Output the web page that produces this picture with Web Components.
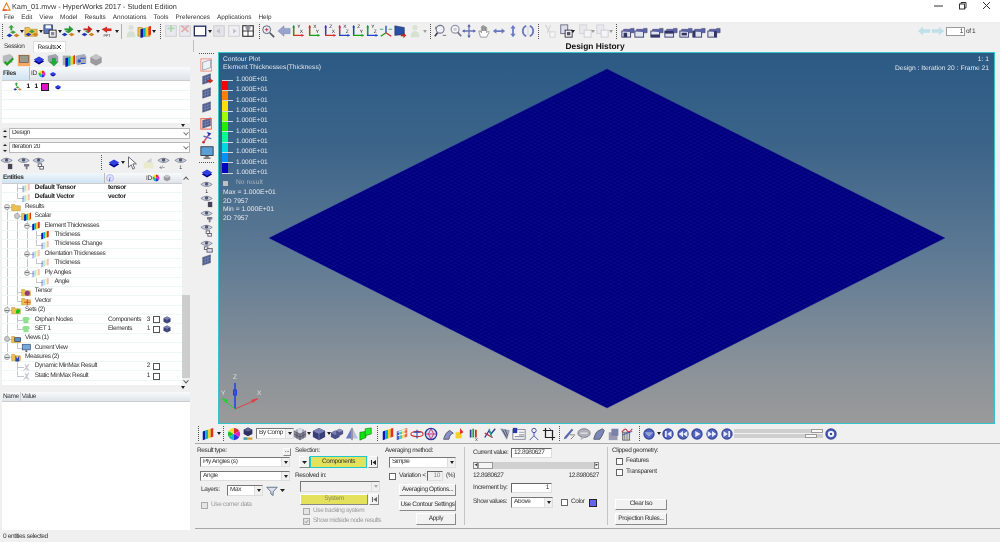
<!DOCTYPE html>
<html>
<head>
<meta charset="utf-8">
<title>HyperWorks</title>
<style>
  html, body { margin: 0; padding: 0; background: #f0f0f0; overflow: hidden; }
  body { font: 6.5px "Liberation Sans", Arial, sans-serif; letter-spacing: -.38px; color: #333; text-rendering: geometricPrecision; }
</style>
</head>
<body>
<hw-app></hw-app>
<script>
// little helpers for the icon drawings
const dia = (x, y, r, c) => `<polygon points="${x},${y-r*.6} ${x+r},${y} ${x},${y+r*.6} ${x-r},${y}" fill="${c}"/>`;
const cube = (x, y, r, c, d) => `<polygon points="${x},${y-r} ${x+r},${y-r*.5} ${x+r},${y+r*.5} ${x},${y+r} ${x-r},${y+r*.5} ${x-r},${y-r*.5}" fill="${d}"/><polygon points="${x},${y-r} ${x+r},${y-r*.5} ${x},${y} ${x-r},${y-r*.5}" fill="${c}"/>`;
const disc = (x, y) => dia(x, y + 1.5, 6, '#00008c') + dia(x, y - .5, 6, '#2f3fe0');
const mol = (dx = 0, dy = 0) => dia(4 + dx, 11 + dy, 3.4, '#2233bb') + dia(12 + dx, 11 + dy, 3.4, '#d08020') + dia(8 + dx, 7.5 + dy, 3.4, '#40a040');
const rain = (dx = 0, dy = 0) => `<g transform="translate(${dx} ${dy})"><path d="M2 5l3-1v10l-3 1z" fill="#0818b8"/><path d="M5 4l3-1v10l-3 1z" fill="#10b0c0"/><path d="M8 3l3-1v10l-3 1z" fill="#e8d820"/><path d="M11 2l3-1v10l-3 1z" fill="#e03020"/></g>`;
const folder = '<path d="M1 4h5l1 2h8v8H1z" fill="#ecc050" stroke="#a87810" stroke-width=".6"/>';
const arrow = (d, c) => `<path d="${d}" fill="${c}" stroke="#0004" stroke-width=".4"/>`;
const axis = (vc, hc, vl, hl) => `<path d="M3 2v11h11" fill="none" stroke="${hc}" stroke-width="1.4"/><path d="M3 2v10" stroke="${vc}" stroke-width="1.6"/><path d="M1.5 4L3 1l1.5 3z" fill="${vc}"/><path d="M12 11.500l3 1.500-3 1.500z" fill="${hc}"/><text x="7" y="5" font-size="5.500" fill="#222" font-family="Liberation Sans">${vl}</text><text x="10" y="10" font-size="5.500" fill="#222" font-family="Liberation Sans">${hl}</text>`;
const sheet = c => `<path d="M3 5l9-3v9l-9 3z" fill="${c}" stroke="#556" stroke-width=".5"/><path d="M6 4v9M9 3v9M3 8l9-3M3 11l9-3" stroke="#fff8" stroke-width=".4"/>`;
const eye = '<path d="M1 5q6-5 13 0q-6 5-13 0z" fill="#c8d4e0" stroke="#667" stroke-width=".7"/><circle cx="7.500" cy="4.600" r="2" fill="#557"/>';
const cam = (a, b) => `<rect x="1" y="${a}" width="10" height="7" fill="#dfe3f0" stroke="#336" stroke-width="1"/><path d="M3 ${a}v-2h7l1 -1h4v5h-4l-1 -1" fill="#5a63a8" stroke="#336" stroke-width=".5"/>${b}`;
const ball = g => `<circle cx="8" cy="8" r="6.500" fill="#3a4aa0"/><circle cx="8" cy="8" r="5" fill="#5566c0"/>${g}`;
const shirt = '<path d="M3 4l3-1h4l3 1 1 3-2 1v5H4V8L2 7z" fill="#8fe08f"/>';
const ICONS = {
  open: mol(0, 2) + arrow('M6 1l-3 3h2v3h2V4h2z', '#38a838'),
  folderm: folder + mol(1, 1),
  save: '<rect x="1" y="1" width="10" height="10" fill="#5a78b8" stroke="#223" stroke-width=".7"/><rect x="3" y="1.500" width="6" height="3.500" fill="#fff"/><rect x="7" y="7" width="8" height="8" fill="#fff" stroke="#222"/><rect x="9" y="9" width="4" height="4" fill="#889"/>',
  expg: mol(-1, 1) + arrow('M3 5h5V2l5 4-5 4V7H3z', '#20a030'),
  expr: mol(0, 1) + arrow('M3 5h5V2l5 4-5 4V7H3z', '#d02820'),
  ppt: arrow('M2 6l6-3v2h5v3H8v2z', '#d83020') + '<text x="4" y="15" font-size="4.500" fill="#333" font-family="Liberation Sans">PPT</text>',
  person: '<circle cx="8" cy="4" r="3" fill="#b8c8a8"/><path d="M3 15q0-7 5-7t5 7z" fill="#a8c8a0"/>',
  folderr: folder + rain(2, 1),
  addp: '<rect x="2" y="2" width="12" height="12" fill="#dde" stroke="#889"/><path d="M8 1v8M4 5h8" stroke="#3a3" stroke-width="2"/>',
  delp: '<rect x="2" y="2" width="12" height="12" fill="#dde" stroke="#889"/><path d="M4 2l8 7M12 2l-8 7" stroke="#c33" stroke-width="2"/>',
  page: '<rect x="1.500" y="2.500" width="13" height="11" fill="#fff" stroke="#202a60" stroke-width="1.500"/>',
  prevp: '<rect x="2" y="2" width="12" height="12" fill="#ccd" stroke="#889"/><path d="M9 5L5 8l4 3z" fill="#667"/>',
  nextp: '<rect x="2" y="2" width="12" height="12" fill="#eef" stroke="#889"/><path d="M7 5l4 3-4 3z" fill="#667"/>',
  multi: '<rect x="2" y="2" width="12" height="12" fill="#fff" stroke="#222" stroke-width="1.200"/><path d="M2 8h12M8 2v12" stroke="#222"/><circle cx="8" cy="4" r="3" fill="#889" opacity=".8"/>',
  zoomi: '<circle cx="6.500" cy="6.500" r="4.500" fill="#e8ecf8" stroke="#556"/><path d="M10 10l5 5" stroke="#556" stroke-width="2"/><path d="M4.500 6.500h4M6.500 4.500v4" stroke="#b33"/>',
  lback: '<path d="M1 8l7-6v3h7v6H8v3z" fill="#98a4d0" stroke="#667" stroke-width=".4"/>',
  xy: axis('#18a018', '#d03030', 'Y', 'X'), yx: axis('#d03030', '#18a018', 'X', 'Y'),
  zx: axis('#2040d0', '#d03030', 'Z', 'X'), xz: axis('#d03030', '#2040d0', 'X', 'Z'),
  zy: axis('#2040d0', '#18a018', 'Z', 'Y'), yz: axis('#18a018', '#2040d0', 'Y', 'Z'),
  iso: '<path d="M8 2v8" stroke="#2040d0" stroke-width="1.500"/><path d="M8 10L2 14" stroke="#18a018" stroke-width="1.500"/><path d="M8 10l6 4" stroke="#d03030" stroke-width="1.500"/><path d="M1 6h4M11 6h4" stroke="#2a7" stroke-width="1"/>',
  fit: '<path d="M2 2l11 2v8L2 13z" fill="#2850a8" stroke="#223" stroke-width=".5"/>' + arrow('M9 12h3v-2l3 3-3 3v-2H9z', '#d02820'),
  mag: '<circle cx="7" cy="6" r="4.500" fill="#eef1f8" stroke="#778" stroke-width="1.300"/><path d="M4 10l-3 4" stroke="#445" stroke-width="2"/><path d="M10 13h4M2 3v3" stroke="#667"/>',
  mag2: '<circle cx="7" cy="6" r="4.500" fill="#f4f6fb" stroke="#99a" stroke-width="1.500"/><circle cx="7" cy="6" r="2" fill="#ccd"/><path d="M10 9.500l4 4.500" stroke="#778" stroke-width="2"/>',
  move: '<path d="M8 1v14M2 8h12" stroke="#6a74b8" stroke-width="1.500"/><path d="M8 0l2 3H6zM8 16l2-3H6zM0 8l3-2v4zM16 8l-3-2v4z" fill="#5a64a8"/>',
  hand: '<path d="M4 15L2 8l2 0 1 2V3h1.500v5V2H8v6V3h1.500v5V4H11v6l2-2 1 1-3 6z" fill="#fff" stroke="#666" stroke-width=".7"/>',
  lr: '<path d="M1 8l4-3v2h6V5l4 3-4 3V9H5v2z" fill="#6a78c0"/>',
  ud: '<path d="M8 1l3 4H9v6h2l-3 4-3-4h2V5H5z" fill="#6a78c0"/>',
  rot: '<path d="M6 2q-4 2-4 6t4 6M10 2q4 2 4 6t-4 6" fill="none" stroke="#6a78c0" stroke-width="2"/><path d="M8 3v10" stroke="#ccd"/>',
  cut: '<path d="M4 1l5 9M10 1L6 10" stroke="#999" stroke-width="1.200"/><rect x="9" y="9" width="6" height="6" fill="#fff" stroke="#999"/>',
  copy: '<rect x="2" y="1" width="8" height="10" fill="#dde" stroke="#667"/><rect x="7" y="7" width="8" height="8" fill="#fff" stroke="#223"/><rect x="9" y="9" width="4" height="4" fill="#556"/>',
  paste: '<rect x="2" y="1" width="8" height="10" fill="#dde" stroke="#99a"/><rect x="7" y="7" width="8" height="8" fill="#fff" stroke="#889"/>',
  cam1: cam(8, '<rect x="3" y="10" width="4" height="5" fill="#336"/>'), cam2: cam(8, ''), cam3: cam(8, '<rect x="1" y="12" width="10" height="3" fill="#336"/>'),
  cam4: cam(8, '<rect x="1" y="8" width="10" height="3" fill="#336"/>'), cam5: cam(8, '<rect x="3" y="10" width="6" height="3" fill="#336"/>'), cam6: cam(8, '<rect x="1" y="8" width="3" height="7" fill="#336"/>'), cam7: cam(8, '<rect x="8" y="8" width="3" height="7" fill="#336"/>'),
  navl: '<path d="M1 8l6-5v3h8v4H7v3z" fill="#bfe0e8"/>', navr: '<path d="M15 8L9 3v3H1v4h8v3z" fill="#bfe0e8"/>',
  rain: rain(), rainf: `<g opacity=".3">${rain()}</g>`,
  wheel: '<circle cx="8" cy="8" r="7" fill="#fff"/><path d="M8 8V1a7 7 0 0 1 6 3.500z" fill="#e02828"/><path d="M8 8l6-3.500a7 7 0 0 1 0 7z" fill="#e820c0"/><path d="M8 8l6 3.500A7 7 0 0 1 8 15z" fill="#3030e0"/><path d="M8 8v7a7 7 0 0 1-6-3.500z" fill="#18b8c8"/><path d="M8 8l-6 3.500a7 7 0 0 1 0-7z" fill="#28c028"/><path d="M8 8L2 4.500A7 7 0 0 1 8 1z" fill="#f0e020"/>',
  raincube: cube(8, 5.500, 5, '#5a5f8c', '#2c3060') + '<rect x="3" y="12" width="10" height="2.500" fill="#d0a030"/><rect x="3" y="12" width="4" height="2.500" fill="#30a0d0"/>',
  wirecube: cube(8, 8, 7, '#d8d8e8', '#889') + '<path d="M1 4.500l7 3.500 7-3.500M8 8v7M4.500 3v10M11.500 3v10M1 8l7 3.500L15 8" fill="none" stroke="#334" stroke-width=".6"/>',
  cube: cube(8, 8, 7, '#7a80b0', '#383e78') + '<path d="M8 8v7" stroke="#aab" stroke-width=".5"/>',
  cubes: cube(6, 9, 5, '#7a80b0', '#4a5088') + cube(11, 6, 4, '#8a90b8', '#50568c'),
  half: '<path d="M7 2L1 13h6z" fill="#6a78c0"/><path d="M9 2l6 11H9z" fill="#b8c0e0"/><path d="M8 1v14" stroke="#334"/>',
  green: '<path d="M1 6l7-1v7l-7 3z" fill="#10e010" stroke="#060" stroke-width=".6"/><path d="M7 2l7-1v7l-7 2z" fill="#20f020" stroke="#060" stroke-width=".6"/>',
  sheetr: rain(),
  sheetf: '<g opacity=".7">' + rain() + '</g><path d="M3 6l10-3M3 10l10-3" stroke="#fff"/>',
  cut2: '<ellipse cx="8" cy="8" rx="7" ry="3" fill="none" stroke="#c33" stroke-width="1.200"/><path d="M8 3v10M4 6h8" stroke="#34a" stroke-width="1.200"/>',
  sphere: '<circle cx="8" cy="8" r="6.500" fill="#d8d8f0" stroke="#2838a0" stroke-width="1.500"/><path d="M8 2l-3 6 3 6 3-6zM2 8h12" stroke="#c03060" fill="none"/>',
  hook: '<path d="M3 14q2-8 7-10l4 3q-4 1-5 7z" fill="#8890c8" stroke="#556"/>',
  marker: '<rect x="3" y="6" width="7" height="7" fill="#f4d020"/><path d="M8 1l4 5-4 2z" fill="#e03020"/>',
  bars: '<path d="M2 3h2v9H2z" fill="#3040b0"/><path d="M5 2h2v10H5z" fill="#20a040"/><path d="M8 3h2v9H8z" fill="#d03020"/><text x="8" y="15.500" font-size="5" fill="#333" font-family="Liberation Sans">X</text>',
  iso2: '<path d="M2 12l5-8 2 4 5-6" fill="none" stroke="#2838a0" stroke-width="1.500"/><path d="M2 7l9 5" stroke="#c83040" stroke-width="1.500"/><path d="M7 2l3 10" stroke="#30a080" stroke-width="1.500"/>',
  wing: '<path d="M3 2l10 2-3 10z" fill="#a0a8cc" stroke="#556a" stroke-width=".6"/><path d="M5 3l5 9M8 3l3 7" stroke="#445"/>',
  note: '<rect x="1" y="3" width="14" height="11" fill="#fff" stroke="#778"/><rect x="1" y="1" width="5" height="6" fill="#2838b0"/><path d="M8 6h6M8 9h6M3 11h11" stroke="#99a" stroke-width="1.300"/>',
  stick: '<circle cx="8" cy="4" r="2.500" fill="none" stroke="#34a"/><path d="M8 6v4M3 15l5-5 5 5" fill="none" stroke="#34a"/>',
  crop: '<path d="M4 1v11h11M1 4h11v11" fill="none" stroke="#222" stroke-width="1.400"/><path d="M8 1l3 3" stroke="#34a"/>',
  pencil: '<path d="M2 14l3-1 8-10-2-1-8 9z" fill="#5a68b0"/><path d="M9 9h6M10 14l4-4" stroke="#777"/>',
  bubble: '<ellipse cx="8" cy="7" rx="7" ry="5" fill="#b0b0b8" stroke="#778"/><path d="M5 11l-1 4 5-3z" fill="#b0b0b8"/><path d="M4 7h8" stroke="#fff"/>',
  shoe: '<path d="M2 14q2-9 6-10l4-2 2 2-2 5-3 5z" fill="#7a86b8" stroke="#556"/>',
  docs: '<path d="M2 6h10v9H2z" fill="#9a9ab0"/><path d="M5 2h8v8H5z" fill="#7a80a8"/>',
  bin: '<rect x="3" y="6" width="8" height="9" fill="#ccc" stroke="#666"/><path d="M5 6v9M8 6v9" stroke="#888"/><path d="M2 6q4-6 6-2t6-2" fill="none" stroke="#d03050" stroke-width="1.300"/><path d="M3 9l11-4" stroke="#3050c0"/>',
  play: ball('<path d="M6 4.500l6 3.500-6 3.500z" fill="#e8ecff"/>'),
  first: ball('<path d="M12 4.500L7 8l5 3.500zM4.500 4.500h2v7h-2z" fill="#e8ecff"/>'),
  rew: ball('<path d="M8 4.500L3 8l5 3.500zM13 4.500L8 8l5 3.500z" fill="#e8ecff"/>'),
  ffw: ball('<path d="M3 4.500L8 8l-5 3.500zM8 4.500L13 8l-5 3.500z" fill="#e8ecff"/>'),
  last: ball('<path d="M4 4.500L9 8l-5 3.500zM9.500 4.500h2v7h-2z" fill="#e8ecff"/>'),
  flat: ball('<path d="M3 6h10L8 11z" fill="#9aa6d8"/>'),
  gear: ball('<circle cx="8" cy="8" r="3.500" fill="#fff"/><circle cx="8" cy="8" r="1.500" fill="#3a4aa0"/>'),
  check: '<path d="M2 3l8-2 4 3-1 7-8 2-3-3z" fill="#b8bcc0"/><path d="M4 10l3 3 7-7" fill="none" stroke="#20a020" stroke-width="2.500"/>',
  box: '<rect x="1" y="2" width="14" height="13" fill="#f8a860"/><rect x="3" y="3" width="10" height="8" fill="#9a9a8c" stroke="#555" stroke-width=".7"/>',
  disc: disc(8, 8),
  downg: '<path d="M2 3l9-2 3 3v6l-9 2-3-3z" fill="#a0a4b0"/>' + arrow('M7 6h4v4h3l-5 5-5-5h3z', '#18b030'),
  boxr: '<path d="M2 3h9v11H2z" fill="#a8aab0"/>' + rain(3, 1),
  flow: '<path d="M2 3l10-2 2 3v8L4 14 2 11z" fill="#a8acb8"/><circle cx="6" cy="9" r="2" fill="#2850c8"/><path d="M7 6h6M8 12h5" stroke="#2850c8" stroke-width="1.200"/>',
  greybox: cube(8, 8, 6.500, '#c4c4c8', '#9a9aa0'),
  eye1: eye + '<text x="6" y="15" font-size="6" fill="#333" font-family="Liberation Sans">1</text>',
  eyepm: eye + '<text x="2" y="15" font-size="5.500" fill="#333" font-family="Liberation Sans">+/−</text>',
  eyea: eye + '<rect x="9" y="9" width="5" height="6" fill="#445"/>',
  eyeb: eye + '<path d="M8 9h6v3h-2v3h-2v-3H8z" fill="#778"/>',
  eyec: eye + '<rect x="7" y="9" width="4" height="3" fill="#fff" stroke="#556"/><rect x="9" y="12" width="4" height="3" fill="#fff" stroke="#556"/>',
  eyed: eye + '<rect x="5" y="9" width="4" height="3" fill="#fff" stroke="#556"/><rect x="8" y="11" width="6" height="4" fill="#dde" stroke="#556"/>',
  s1: sheet('#e8f0f8') + '<rect x="1" y="1" width="12" height="14" fill="none" stroke="#ee8878" stroke-width="1"/>',
  s2: sheet('#4a5a90') + arrow('M8 9h3V7l4 3-4 3v-2H8z', '#d02820'),
  s3: sheet('#4a5a90'), s4: sheet('#4a5a90'),
  s5: sheet('#4a5a90') + '<rect x="1" y="3" width="12" height="12" fill="none" stroke="#ee6858" stroke-width="1.200"/>',
  pin: '<path d="M4 14l7-10" stroke="#d05060" stroke-width="1.500"/><circle cx="4" cy="14" r="1.500" fill="#c03030"/><path d="M8 2l5 2-3 3z" fill="#2838a8"/><path d="M4 7l9 3" stroke="#5060c0" stroke-width="1.500"/>',
  monitor: '<rect x="1" y="2" width="14" height="10" fill="#5aa0d8" stroke="#333" stroke-width="1"/><path d="M6 13h4v1H6z" fill="#222"/><path d="M4 15h8" stroke="#222"/>',
  cursor: '<path d="M4 1v12l3-3 2 5 2-1-2-5h4z" fill="#fff" stroke="#334" stroke-width=".8"/>',
  info: '<circle cx="8" cy="8" r="7" fill="#dfe3ff" stroke="#8890d0"/><text x="6" y="13" font-size="11" font-style="italic" font-weight="700" fill="#3040c0" font-family="Liberation Serif">i</text>',
  tint: '<rect x="3" y="7" width="11" height="7" fill="#e8eccc"/><path d="M6 7l6-5v5z" fill="#ccd"/>',
  filter: '<path d="M1 3h14L9.500 9v5l-3-2V9z" fill="#d8e0f0" stroke="#456" stroke-width="1"/>',
  folder, fscalar: folder + rain(3, 1), fset: folder + '<path d="M8 9l3-3 4 3-3 5-4-1z" fill="#18c018"/>',
  ften: folder + '<circle cx="10" cy="10" r="4" fill="#7040a0"/><path d="M6 10h8M10 6v8" stroke="#d03030"/>',
  fvec: folder + '<path d="M10 5v10M5 10h10" stroke="#d03030" stroke-width="1.300"/>',
  fview: folder + '<rect x="6" y="6" width="9" height="6" fill="#5a90c8" stroke="#235"/>',
  fmeas: folder + '<path d="M7 5l3 6 3-5v9H7z" fill="#2848b0"/>',
  shirt, view: '<rect x="2" y="2" width="13" height="9" fill="#78a8d8" stroke="#2a4a78"/><path d="M7 12h3v2H7z" fill="#222"/>',
  meas: '<path d="M4 14l4-6-2-5 3 3 4-3-3 6 3 5-5-3z" fill="#ccd" stroke="#aab" stroke-width=".5"/>'
};

class HwIcon extends HTMLElement {
  connectedCallback() {
    const n = this.getAttribute('name');
    const s = this.getAttribute('size') || 14;
    this.attachShadow({ mode: 'open' });
    this.shadowRoot.innerHTML = `
      <style>:host { display: inline-block; width: ${s}px; height: ${s}px; flex: none; } svg { display: block; }</style>
      <svg width="${s}" height="${s}" viewBox="0 0 16 16">${ICONS[n] || ''}</svg>`;
  }
}
customElements.define('hw-icon', HwIcon);

// row (or column) of tools, each token is "centre:name", the centre being
// measured from the start of the bar. "~" at the end of a name fades it.
class HwToolbar extends HTMLElement {
  connectedCallback() {
    const vertical = this.hasAttribute('vertical');
    const start = vertical ? 'top' : 'left';
    const items = this.getAttribute('items').trim().split(/\s+/);
    let cursor = 0, html = '';
    for (const it of items) {
      const [pos, raw, w] = it.split(':');
      const x = parseFloat(pos);
      const faded = raw.endsWith('~');
      const name = raw.replace('~', '');
      let size = name === 'a' ? 5 : name === 'grip' ? 2 : name === 'sep' ? 1 : +(this.getAttribute('icon') || 14);
      if (name[0] === '@') size = +w;
      const m = `margin-${start}:${(x - size / 2 - cursor).toFixed(1)}px`;
      const cls = faded ? 'f' : '';
      if (name === 'a') html += `<i class="a ${cls}" style="${m}"></i>`;
      else if (name === 'grip') html += `<i class="grip" style="${m}"></i>`;
      else if (name === 'sep') html += `<i class="sep" style="${m}"></i>`;
      else if (name[0] === '@') html += `<span class="sl" style="${m};width:${size}px"><slot name="${name.slice(1)}"></slot></span>`;
      else html += `<hw-icon name="${name}" size="${size}" class="${cls}" style="${m}"></hw-icon>`;
      cursor = x + size / 2;
    }
    this.attachShadow({ mode: 'open' });
    this.shadowRoot.innerHTML = `
      <style>
        :host { display: flex; flex-direction: ${vertical ? 'column' : 'row'}; align-items: center; }
        .f { opacity: .35; }
        .a { width: 0; height: 0; border: 2.5px solid transparent; border-top: 3px solid #222; border-bottom: 0; flex: none; box-sizing: content-box; }
        .a.f { opacity: .4; }
        .grip { flex: none; ${vertical ? 'width: 15px; height: 2px; border-top: 1.5px dotted #555;' : 'width: 2px; height: 15px; border-left: 1.5px dotted #555;'} box-sizing: border-box; }
        .sep { flex: none; width: 1px; height: 15px; background: #b0b0b0; }
        .sl { display: flex; flex: none; }
      </style>${html}`;
  }
}
customElements.define('hw-toolbar', HwToolbar);

class HwCombo extends HTMLElement {
  connectedCallback() {
    const w = this.getAttribute('w'), h = this.getAttribute('h') || 10;
    const dis = this.hasAttribute('disabled');
    const flat = this.hasAttribute('flat');
    this.attachShadow({ mode: 'open' });
    this.shadowRoot.innerHTML = `
      <style>
        :host { display: flex; flex: none; box-sizing: border-box; height: ${h}px; ${w ? `width:${w}px;` : ''}
          background: ${dis ? '#f0f0f0' : '#fff'}; border: 1px solid; border-color: ${flat ? '#b8b8b8' : '#777 #ddd #ddd #777'}; align-items: center; }
        span { flex: 1; padding-left: 2px; white-space: nowrap; overflow: hidden; line-height: 1; color: ${dis ? '#999' : '#333'}; }
        b { flex: none; width: ${flat ? 7 : 8}px; height: 100%; background: ${flat ? '#fff' : '#f0f0f0'}; display: flex; align-items: center; justify-content: center; ${flat ? '' : 'border-left: 1px solid #ddd;'} box-sizing: border-box; }
        b::after { ${flat
          ? `content: ''; width: 3px; height: 3px; border-right: 1px solid #777; border-bottom: 1px solid #777; transform: rotate(45deg) translate(-1px,-1px);`
          : `content: ''; border: 2.5px solid transparent; border-top: 3px solid ${dis ? '#aaa' : '#222'}; border-bottom: 0;`} }
      </style>
      <span><slot></slot></span><b></b>`;
  }
}
customElements.define('hw-combo', HwCombo);

class HwButton extends HTMLElement {
  connectedCallback() {
    const yellow = this.hasAttribute('yellow');
    const active = this.hasAttribute('active');
    this.attachShadow({ mode: 'open' });
    this.shadowRoot.innerHTML = `
      <style>
        :host { display: flex; flex: none; box-sizing: border-box; align-items: center; justify-content: center; white-space: nowrap; line-height: 1;
          width: ${this.getAttribute('w') || 50}px; height: ${this.getAttribute('h') || 11}px;
          background: ${yellow ? '#e4e25c' : '#f2f2f2'};
          border: 1px solid; border-color: ${active ? '#22c8c8' : '#fff #888 #888 #fff'};
          ${active ? 'border-width: 1.5px;' : ''}
          color: ${this.hasAttribute('dim') ? '#8a8a60' : '#333'}; }
      </style><slot></slot>`;
  }
}
customElements.define('hw-button', HwButton);

class HwCheck extends HTMLElement {
  connectedCallback() {
    const dis = this.hasAttribute('disabled');
    const on = this.hasAttribute('checked');
    this.attachShadow({ mode: 'open' });
    this.shadowRoot.innerHTML = `
      <style>
        :host { display: flex; align-items: center; flex: none; gap: 3px; white-space: nowrap; line-height: 1; color: ${dis ? '#999' : '#333'}; }
        i { width: 5px; height: 5px; border: 1px solid ${dis ? '#aaa' : '#666'}; background: ${dis ? '#e4e4e4' : '#fff'}; flex: none; display: flex; }
        svg { display: block; }
      </style>
      <i>${on ? '<svg width="5" height="5" viewBox="0 0 6 6"><path d="M1 3l1.500 1.500L5 1.500" fill="none" stroke="#888"/></svg>' : ''}</i><span><slot></slot></span>`;
  }
}
customElements.define('hw-check', HwCheck);

class HwTitlebar extends HTMLElement {
  connectedCallback() {
    this.attachShadow({ mode: 'open' });
    this.shadowRoot.innerHTML = `
      <style>
        :host { display: flex; flex-direction: column; height: 22px; background: #fff; }
        .t { display: flex; align-items: center; height: 12px; padding-left: 2px; gap: 1px; font-size: 7.3px; letter-spacing: 0; }
        .t span { flex: 1; }
        .win { display: flex; align-items: center; gap: 14px; padding-right: 8px; }
        .win svg { display: block; }
        nav { display: flex; height: 10px; align-items: center; padding-left: 4px; gap: 7px; font-size: 6.4px; letter-spacing: 0; }
      </style>
      <div class="t">
        <svg width="9" height="9" viewBox="0 0 10 10"><path d="M5 1L1 9h8z" fill="none" stroke="#e88020" stroke-width="1.200"/><path d="M1 9h4" stroke="#e03030" stroke-width="1.200"/></svg>
        <span>Kam_01.mvw - HyperWorks 2017 - Student Edition</span>
        <div class="win">
          <svg width="10" height="10" viewBox="0 0 10 10"><path d="M0 5h9" stroke="#333"/></svg>
          <svg width="10" height="10" viewBox="0 0 10 10"><rect x="1.500" y="3" width="5" height="5" fill="none" stroke="#333"/><path d="M3 3V1.500h5V7H6.500" fill="none" stroke="#333"/></svg>
          <svg width="10" height="10" viewBox="0 0 10 10"><path d="M1 1l7 7M8 1L1 8" stroke="#333"/></svg>
        </div>
      </div>
      <nav>${['File','Edit','View','Model','Results','Annotations','Tools','Preferences','Applications','Help'].map(m => `<span>${m}</span>`).join('')}</nav>`;
  }
}
customElements.define('hw-titlebar', HwTitlebar);

class HwEntityTree extends HTMLElement {
  connectedCallback() {
    // depth, icon, label, opts
    const rows = [
      [1, 'rainf', 'Default Tensor', { b: 1, c: 'tensor' }],
      [1, 'rainf', 'Default Vector', { b: 1, c: 'vector' }],
      [0, 'folder', 'Results', { e: 1 }],
      [1, 'fscalar', 'Scalar', { e: 2 }],
      [2, 'rain', 'Element Thicknesses', { e: 1 }],
      [3, 'rain', 'Thickness', {}],
      [3, 'rainf', 'Thickness Change', {}],
      [2, 'rainf', 'Orientation Thicknesses', { e: 1 }],
      [3, 'rainf', 'Thickness', {}],
      [2, 'rainf', 'Ply Angles', { e: 1 }],
      [3, 'rainf', 'Angle', {}],
      [1, 'ften', 'Tensor', {}],
      [1, 'fvec', 'Vector', {}],
      [0, 'fset', 'Sets', { e: 1, n: '(2)' }],
      [1, 'shirt', 'Orphan Nodes', { c: 'Components', id: 3, k: 1, s: 1 }],
      [1, 'shirt', 'SET 1', { c: 'Elements', id: 1, k: 1, s: 1 }],
      [0, 'fview', 'Views', { e: 2, n: '(1)' }],
      [1, 'view', 'Current View', {}],
      [0, 'fmeas', 'Measures', { e: 1, n: '(2)' }],
      [1, 'meas', 'Dynamic MinMax Result', { id: 2, k: 1 }],
      [1, 'meas', 'Static MinMax Result', { id: 1, k: 1 }]
    ];
    const X = d => 7 + 9.8 * d;
    const RH = 9.4;
    const continues = (i, L) => {
      for (let j = i + 1; j < rows.length; j++) {
        if (rows[j][0] === L) return true;
        if (rows[j][0] < L) return false;
      }
      return false;
    };
    const html = rows.map((r, i) => {
      const [d, icon, label, o] = r;
      const bg = [];
      const line = (x, y, w, h) => bg.push(`linear-gradient(#c4c8cc,#c4c8cc) ${x}px ${y}px / ${w}px ${h}px no-repeat`);
      for (let L = 0; L < d; L++) {
        if (L === 0 && i < 2) continue;
        if (continues(i, L)) line(X(L) - 2, 0, 1, RH);
      }
      if (!(d === 0 && i === 2)) line(X(d) - 2, 0, 1, continues(i, d) ? RH : RH / 2);
      else line(X(d) - 2, RH / 2, 1, RH / 2);
      line(X(d) - 2, RH / 2, 7, 1);
      const exp = o.e ? `<i class="exp ${o.e === 2 ? 'g' : ''}" style="margin-left:${X(d) - 5}px"></i>` : `<i style="margin-left:${X(d) - 5}px;width:7px;flex:none"></i>`;
      return `<div class="r" style="background:${bg.join(',')}">
        ${exp}<hw-icon name="${icon}" size="10"></hw-icon>
        <span class="l ${o.b ? 'b' : ''}" style="width:${94 - X(d)}px">${label}${o.n ? ' ' + o.n : ''}</span>
        <span class="c ${o.b ? 'b' : ''}">${o.c || ''}</span>
        <span class="id">${o.id || ''}</span>
        ${o.k ? '<i class="k"></i>' : '<i class="k n"></i>'}
        ${o.s ? '<hw-icon name="cube" size="8"></hw-icon>' : ''}
      </div>`;
    }).join('');
    this.attachShadow({ mode: 'open' });
    this.shadowRoot.innerHTML = `
      <style>
        :host { display: flex; flex-direction: column; flex: 1; background: #fff; overflow: hidden; min-width: 0; }
        .r { display: flex; align-items: center; height: ${RH}px; white-space: nowrap; line-height: 1; flex: none; box-shadow: inset 0 -1px 0 #eff7f5; }
        .exp { width: 6px; height: 6px; flex: none; box-sizing: border-box; margin-right: 1px; border-radius: 50%; background: linear-gradient(#777,#777) center / 4px 1px no-repeat, #e8e8e8; border: .5px solid #aaa; }
        .exp.g { background: #c8c8c8; }
        .l { flex: none; padding-left: 4px; box-sizing: border-box; }
        .b { font-weight: 700; color: #222; letter-spacing: -.3px; }
        .c { width: 36px; flex: none; }
        .id { width: 6px; flex: none; text-align: right; }
        .k { width: 5px; height: 5px; border: 1px solid #555; flex: none; margin: 0 3px; background: #fff; }
        .k.n { border-color: transparent; background: none; }
      </style>${html}`;
  }
}
customElements.define('hw-entity-tree', HwEntityTree);

class HwSidePanel extends HTMLElement {
  connectedCallback() {
    const spin = `<span class="spin"><i class="u"></i><i class="d"></i></span>`;
    this.attachShadow({ mode: 'open' });
    this.shadowRoot.innerHTML = `
      <style>
        :host { display: flex; flex-direction: column; width: 191px; flex: none; background: #f0f0f0; }
        .tabs { display: flex; height: 12px; align-items: flex-end; padding-left: 4px; flex: none; }
        .tabs span { height: 11px; display: flex; align-items: center; }
        .tabs .on { background: #fff; margin-left: 9px; padding: 0 3px; width: 25px; justify-content: space-between; border: 1px solid #ddd; border-bottom: 0; box-sizing: content-box; height: 10px; }
        .hd { display: flex; align-items: center; box-sizing: border-box; background: linear-gradient(#f8fafc, #dfe4ea); border-bottom: 1px solid #ccc; margin: 0 1px 0 2px; flex: none; line-height: 1; }
        .hd > span:not(.sel) { padding-top: 2px; }
        .files { height: 14px; }
        .sel { background: linear-gradient(#f0f7fc, #cfe4f2); height: 100%; display: flex; align-items: center; padding: 1px 0 0 1px; border-right: 1px solid #bbb; box-sizing: border-box; font-weight: 700; }
        .list { height: 42px; background: #fff; margin: 0 1px 0 2px; flex: none; background-image: repeating-linear-gradient(#fff 0 8.500px, #eef6f4 8.500px 9.500px); }
        .row1 { display: flex; align-items: center; height: 11px; padding-left: 11px; font-weight: 700; color: #111; }
        .row1 span { width: 8px; text-align: center; }
        .mag { width: 6px; height: 6px; background: #e010d0; border: 1px solid #222; margin: 0 5px 0 1px; }
        .grab { height: 5px; flex: none; display: flex; justify-content: flex-end; padding-right: 6px; align-items: center; }
        .grab::after { content: ''; border: 2.5px solid transparent; border-top: 3px solid #222; border-bottom: 0; }
        .cb { display: flex; height: 11px; align-items: stretch; margin: 0 1px 0 2px; flex: none; gap: 1px; }
        .spin { display: flex; flex-direction: column; width: 6px; flex: none; gap: 1px; }
        .spin i { flex: 1; background: #eaeaea; display: flex; align-items: center; justify-content: center; }
        .spin .u::after { content: ''; border: 2px solid transparent; border-bottom: 2px solid #222; border-top: 0; }
        .spin .d::after { content: ''; border: 2px solid transparent; border-top: 2px solid #222; border-bottom: 0; }
        .tree { display: flex; height: 212px; margin: 1px 0 0 2px; flex: none; }
        .left { display: flex; flex-direction: column; flex: 1; min-width: 0; }
        .ent { height: 10.600px; margin: 0; flex: none; }
        .ent .sel { width: 103px; }
        .sb { width: 8px; flex: none; display: flex; flex-direction: column; background: #f0f0f0; margin-right: 1px; }
        .sb .ar { height: 10px; flex: none; display: flex; align-items: center; justify-content: center; }
        .sb .ar.t::after { content: ''; width: 3px; height: 3px; border-left: 1px solid #555; border-top: 1px solid #555; transform: rotate(45deg) translate(1px,1px); }
        .sb .ar.b::after { content: ''; width: 3px; height: 3px; border-right: 1px solid #555; border-bottom: 1px solid #555; transform: rotate(45deg) translate(-1px,-1px); }
        .sb .sp { height: 112px; flex: none; }
        .sb .th { height: 83px; flex: none; background: #cdcdcd; }
        .nv { height: 10px; flex: none; margin-top: 2px; }
        .nv span { padding: 0 1px; }
        .nv span + span { border-left: 1px solid #ccc; }
        .blank { flex: 1; background: #fff; margin: 0 1px 0 2px; }
      </style>
      <div class="tabs"><span>Session</span><span class="on">Results <svg width="6" height="6" viewBox="0 0 6 6"><path d="M1 1l4 4M5 1L1 5" stroke="#444"/></svg></span></div>
      <hw-toolbar style="height:15px;flex:none" items="8:check 24:box 39:disc 53:downg 68:boxr 81:flow 96:greybox"></hw-toolbar>
      <div class="hd files">
        <span class="sel" style="width:28px">Files</span>
        <span style="margin-left:1px">ID</span>
        <hw-icon name="wheel" size="8" style="margin-left:1px"></hw-icon>
        <hw-icon name="disc" size="8" style="margin-left:3px"></hw-icon>
      </div>
      <div class="list">
        <div class="row1"><hw-icon name="open" size="9"></hw-icon><span style="margin-left:2px">1</span><span>1</span><i class="mag"></i><hw-icon name="disc" size="8"></hw-icon></div>
      </div>
      <div class="grab"></div>
      <div class="cb">${spin}<hw-combo style="flex:1" h="11" flat>Design</hw-combo></div>
      <div class="cb" style="margin-top:3px">${spin}<hw-combo style="flex:1" h="11" flat>Iteration 20</hw-combo></div>
      <hw-toolbar style="height:19px;flex:none" items="7:eyea 24:eyeb 39:eyec 102:grip 114:disc 123:a 133:cursor 149:tint 165:eyepm 182:eye1"></hw-toolbar>
      <div class="tree">
        <div class="left">
          <div class="hd ent">
            <span class="sel">Entities</span>
            <hw-icon name="info" size="8" style="margin-left:1px"></hw-icon>
            <span style="margin-left:32px">ID</span>
            <hw-icon name="wheel" size="8"></hw-icon>
            <hw-icon name="greybox" size="8" style="margin-left:3px"></hw-icon>
          </div>
          <hw-entity-tree></hw-entity-tree>
        </div>
        <div class="sb"><div class="ar t"></div><div class="sp"></div><div class="th"></div><div class="ar b" style="height:7px"></div></div>
      </div>
      <div class="grab"></div>
      <div class="hd nv"><span>Name</span><span>Value</span></div>
      <div class="blank"></div>`;
  }
}
customElements.define('hw-side-panel', HwSidePanel);

class HwViewport extends HTMLElement {
  connectedCallback() {
    const cols = ['#ff0000', '#ff8000', '#ffe000', '#a0ff00', '#20f000', '#00ff90', '#00d8e0', '#0090ff', '#0000c0'];
    const N = 89;
    let d = '';
    for (let i = 0; i <= N; i++) {
      const t = i / N;
      const ax = 388 + 338 * t, ay = 16 + 169 * t;
      const bx = 50 + 338 * t, by = 185 + 170 * t;
      d += `M${ax.toFixed(1)} ${ay.toFixed(1)}L${bx.toFixed(1)} ${by.toFixed(1)}`;
      const cx = 388 - 338 * t, cy = 16 + 169 * t;
      const ex = 726 - 338 * t, ey = 185 + 170 * t;
      d += `M${cx.toFixed(1)} ${cy.toFixed(1)}L${ex.toFixed(1)} ${ey.toFixed(1)}`;
    }
    this.attachShadow({ mode: 'open' });
    this.shadowRoot.innerHTML = `
      <style>
        :host { display: block; position: relative; flex: none; width: 777px; height: 372px; box-sizing: border-box; border: 1px solid #35c4c8; overflow: hidden;
          background: linear-gradient(#2b5a85 0%, #3c6489 25%, #5e7a94 55%, #8a9299 85%, #9a9a9a 100%); color: #e4e8ec; line-height: 1; font-size: 6.7px; letter-spacing: 0; }
        svg.mesh { position: absolute; left: 0; top: 0; }
        .legend { position: absolute; left: 3px; top: 3px; display: flex; flex-direction: column; }
        .legend div { white-space: nowrap; }
        .t { height: 8.500px; display: flex; align-items: center; margin-left: 1px; }
        .scale { display: flex; margin-top: 2px; }
        .bar { width: 6px; display: flex; flex-direction: column; margin: 5px 0 0 0; }
        .bar i { height: 10.350px; display: block; }
        .lab { margin-left: 8px; font-size: 6.5px; }
        .lab div { height: 10.350px; display: flex; align-items: center; position: relative; }
        .lab div::before { content: ''; position: absolute; left: -14px; width: 11px; height: 1px; background: #cfd6dc; }
        .nr { display: flex; align-items: center; gap: 8px; height: 10px; color: #aab4bc; margin-left: 1px; }
        .nr i { width: 5px; height: 5px; background: #c0c0c0; display: block; }
        .info { position: absolute; right: 5px; top: 3px; text-align: right; }
        .info div { height: 9px; display: flex; align-items: center; justify-content: flex-end; }
        svg.triad { position: absolute; left: 2px; bottom: 10px; }
      </style>
      <svg class="mesh" width="775" height="370">
        <polygon points="388,16 726,185 388,355 50,185" fill="#00007c"/>
        <path d="${d}" stroke="#1a1ab0" stroke-width=".28" fill="none"/>
      </svg>
      <div class="legend">
        <div class="t">Contour Plot</div>
        <div class="t">Element Thicknesses(Thickness)</div>
        <div class="scale">
          <div class="bar">${cols.map(c => `<i style="background:${c}"></i>`).join('')}</div>
          <div class="lab">${Array(10).fill('<div>1.000E+01</div>').join('')}</div>
        </div>
        <div class="nr"><i></i>No result</div>
        <div class="t" style="margin-top:1px">Max = 1.000E+01</div>
        <div class="t">2D 7957</div>
        <div class="t">Min = 1.000E+01</div>
        <div class="t">2D 7957</div>
      </div>
      <div class="info"><div>1: 1</div><div>Design : Iteration 20 : Frame 21</div></div>
      <svg class="triad" width="44" height="42" viewBox="0 0 44 42">
        <path d="M14 38V12" stroke="#2040e0" stroke-width="1.500"/><rect x="12.500" y="19" width="3" height="5" fill="none" stroke="#2040e0"/>
        <path d="M14 38L1 28" stroke="#20d030" stroke-width="1"/><path d="M1 27l6 2-2 3z" fill="#20d030"/>
        <path d="M14 38L37 28" stroke="#e04040" stroke-width="1"/><path d="M37 27l-7 2 2 3z" fill="#e04040"/>
        <text x="12" y="8" font-size="6.500" fill="#ddd" font-family="Liberation Sans">Z</text>
        <text x="0" y="24" font-size="6.500" fill="#ddd" font-family="Liberation Sans">Y</text>
        <text x="36" y="24" font-size="6.500" fill="#ddd" font-family="Liberation Sans">X</text>
      </svg>`;
  }
}
customElements.define('hw-viewport', HwViewport);

class HwContourPanel extends HTMLElement {
  connectedCallback() {
    this.attachShadow({ mode: 'open' });
    this.shadowRoot.innerHTML = `
      <style>
        :host { display: grid; grid-template-columns: 98px 90px 79px 1px 142px 1px 1fr; height: 87px; box-sizing: border-box; padding-left: 2px; border-top: 1px solid #aaa; flex: none; line-height: 1; }
        .bot { grid-column: 1 / -1; height: 1px; background: #a8a8a8; margin-left: -2px; align-self: start; grid-row: 2; }
        .col { display: flex; flex-direction: column; padding-top: 3px; height: 83px; box-sizing: border-box; }
        .r { display: flex; align-items: center; flex: none; white-space: nowrap; }
        .dv { background: #c4c4c4; height: 78px; margin-top: 3px; }
        .bk { width: 10px; height: 11px; border: 1px solid; border-color: #fff #888 #888 #fff; box-sizing: border-box; display: flex; align-items: center; justify-content: center; background: #f2f2f2; flex: none; }
        .bk svg, .drop svg { display: block; }
        .drop { width: 11px; height: 11px; border: 1px solid; border-color: #fff #888 #888 #fff; box-sizing: border-box; display: flex; align-items: center; justify-content: center; background: #f2f2f2; flex: none; }
        .dots { width: 8px; height: 8px; margin-left: auto; margin-right: 4px; border: 1px solid; border-color: #fff #888 #888 #fff; box-sizing: border-box; display: flex; align-items: flex-end; justify-content: center; }
        .inp { background: #fff; border: 1px solid; border-color: #666 #ddd #ddd #666; box-sizing: border-box; display: flex; align-items: center; padding: 0 2px; height: 10px; flex: none; }
        .slide { height: 7px; background: #d0d0d0; display: flex; justify-content: space-between; margin-right: 8px; }
        .slide i { width: 5px; background: #f4f4f4; border: .5px solid #888; box-sizing: border-box; display: flex; align-items: center; justify-content: center; font-style: normal; font-size: 5px; }
        .slide b { width: 15px; background: #f4f4f4; border: .5px solid #999; box-sizing: border-box; margin-right: auto; }
        .sw { width: 6px; height: 6px; background: #6464f0; border: 1px solid #223; margin-left: 4px; }
        .lb { width: 38px; flex: none; }
      </style>
      <div class="col">
        <div class="r" style="height:9px">Result type:<span class="dots">...</span></div>
        <hw-combo w="90" h="10" style="margin:1px 0 0 3px">Ply Angles (s)</hw-combo>
        <hw-combo w="90" h="10" style="margin:4px 0 0 3px">Angle</hw-combo>
        <div class="r" style="height:11px;margin:4px 0 0 4px"><span style="width:26px">Layers:</span><hw-combo w="36" h="11">Max</hw-combo>
          <hw-icon name="filter" size="12" style="margin-left:3px"></hw-icon>
          <svg width="5" height="3" style="margin-left:2px"><path d="M0 0h5L2.500 3z" fill="#222"/></svg></div>
        <hw-check disabled style="margin:4px 0 0 4px;height:10px">Use corner data</hw-check>
      </div>
      <div class="col">
        <div class="r" style="height:9px">Selection:</div>
        <div class="r" style="height:12px;margin-left:4px">
          <span class="drop" style="height:12px"><svg width="5" height="3"><path d="M0 0h5L2.500 3z" fill="#222"/></svg></span>
          <hw-button w="57" h="12" yellow active>Components</hw-button>
          <span class="bk" style="height:12px;margin-left:1px"><svg width="5" height="5"><path d="M0 0h1v5H0zM5 0v5L1.500 2.500z" fill="#222"/></svg></span>
        </div>
        <div class="r" style="height:9px;margin-top:4px">Resolved in:</div>
        <hw-combo w="80" h="11" disabled style="margin-left:5px"></hw-combo>
        <div class="r" style="height:11px;margin:2px 0 0 5px">
          <hw-button w="68" h="11" yellow dim>System</hw-button>
          <span class="bk" style="margin-left:1px"><svg width="5" height="5"><path d="M0 0h1v5H0zM5 0v5L1.500 2.500z" fill="#666"/></svg></span>
        </div>
        <hw-check disabled style="margin:1px 0 0 8px;height:10px">Use tracking system</hw-check>
        <hw-check disabled checked style="margin-left:8px;height:10px">Show midside node results</hw-check>
      </div>
      <div class="col">
        <div class="r" style="height:9px">Averaging method:</div>
        <hw-combo w="67" h="11" style="margin:1px 0 0 4px">Simple</hw-combo>
        <div class="r" style="height:10px;margin:3px 0 0 4px"><hw-check style="width:38px">Variation &lt;</hw-check>
          <span class="inp" style="width:16px;justify-content:flex-end;color:#888;background:#f0f0f0">10</span><span style="margin-left:3px">(%)</span></div>
        <hw-button w="57" h="12" style="margin:3px 0 0 14px">Averaging Options...</hw-button>
        <hw-button w="57" h="11" style="margin:4px 0 0 14px">Use Contour Settings</hw-button>
        <hw-button w="40" h="12" style="margin:2px 0 0 31px">Apply</hw-button>
      </div>
      <div class="dv"></div>
      <div class="col" style="padding:4px 0 0 8px">
        <div class="r" style="height:10px"><span class="lb">Current value:</span><span class="inp" style="width:41px">12.8980627</span></div>
        <div class="slide" style="margin-top:4px"><i>◂</i><b></b><i>▸</i></div>
        <div class="r" style="height:8px;margin-top:3px;justify-content:space-between;padding-right:8px"><span>12.8980627</span><span>12.8980627</span></div>
        <div class="r" style="height:10px;margin-top:3px"><span class="lb">Increment by:</span><span class="inp" style="width:41px;justify-content:flex-end">1</span></div>
        <div class="r" style="height:11px;margin-top:4px"><span class="lb">Show values:</span><hw-combo w="42" h="11">Above</hw-combo>
          <hw-check style="margin-left:8px">Color</hw-check><i class="sw"></i></div>
      </div>
      <div class="dv"></div>
      <div class="col" style="padding-left:4px">
        <div class="r" style="height:9px">Clipped geometry:</div>
        <hw-check style="margin:1px 0 0 4px;height:9px">Features</hw-check>
        <hw-check style="margin:2px 0 0 4px;height:9px">Transparent</hw-check>
        <hw-button w="52" h="11" style="margin:22px 0 0 3px">Clear Iso</hw-button>
        <hw-button w="52" h="12" style="margin:3px 0 0 3px">Projection Rules...</hw-button>
      </div>
      <div class="bot"></div>`;
  }
}
customElements.define('hw-contour-panel', HwContourPanel);

class HwApp extends HTMLElement {
  connectedCallback() {
    this.attachShadow({ mode: 'open' });
    this.shadowRoot.innerHTML = `
      <style>
        :host { display: flex; flex-direction: column; width: 1000px; height: 542px; overflow: hidden; background: #f0f0f0; filter: blur(.3px); }
        .main { display: flex; flex: none; height: 490px; }
        .split { width: 4px; flex: none; display: flex; justify-content: center; }
        .split::after { content: ''; width: 1px; height: 12px; background: #c0c0c0; }
        .right { display: flex; flex-direction: column; width: 805px; flex: none; }
        .ttl { height: 12px; flex: none; display: flex; align-items: center; justify-content: center; font-size: 8.400px; letter-spacing: 0; font-weight: 700; color: #111; width: 800px; }
        .mid { display: flex; height: 372px; flex: none; }
        .status { height: 12px; flex: none; display: flex; align-items: center; padding-left: 3px; }
        .page { display: flex; align-items: center; gap: 1px; white-space: nowrap; }
        .num { width: 19px; height: 9px; background: #fff; border: 1px solid #999; box-sizing: border-box; display: flex; align-items: center; justify-content: flex-end; padding-right: 1px; }
        .sld { display: flex; flex-direction: column; gap: 1px; height: 9px; width: 89px; }
        .sld i { flex: 1; background: #cfcfcf; display: flex; justify-content: flex-end; }
        .sld i::after { content: ''; width: 12px; background: #f8f8f8; border: .5px solid #999; box-sizing: border-box; }
        .sld i + i::after { margin-right: 6px; }
      </style>
      <hw-titlebar></hw-titlebar>
      <hw-toolbar style="height:18px;flex:none" items="
        3:grip 13:open 22:a 32:folderm 42:a 52:save 62:a 72:expg 82:a 92:expr 102:a 112:ppt 122:a 127:sep
        137:person~ 150:folderr 160:a 168:grip 178:addp~ 192:delp~ 207:page 217:a 227:prevp~ 242:nextp~ 256:multi 268:grip
        276:zoomi 292:lback 306:xy 322:yx 338:zx 352:xz 366:zy 380:yz 394:iso 408:fit 423:person~ 433:a~ 440:grip
        450:mag 465:mag2 478:move 493:hand 508:lr 522:ud 537:rot 548:grip 558:cut~ 575:copy 582:a 595:paste~ 603:a~ 613:paste~ 622:a~ 629:grip
        640:cam1 653:cam2 669:cam3 683:cam4 698:cam5 711:cam6 726:cam7 936:navl 950:navr 974:@page:32">
        <span slot="page" class="page"><span class="num">1</span>of 1</span>
      </hw-toolbar>
      <div class="main">
        <hw-side-panel></hw-side-panel>
        <div class="split"></div>
        <div class="right">
          <div class="ttl">Design History</div>
          <div class="mid">
            <hw-toolbar vertical style="width:23px;flex:none" items="2:grip 13:s1 27:s2 41:s3 55:s4 71:s5 85:pin 100:monitor 111:grip 121:disc 135:eye1 149:eyea 164:eyeb 178:eyec 194:eyed 208:s3"></hw-toolbar>
            <hw-viewport></hw-viewport>
          </div>
          <hw-toolbar style="height:19px;flex:none" items="
            4:grip 13:rain 24:a 30:grip 40:wheel 54:raincube 81:@by:38 106:wirecube 115:a 126:cube 136:a 145:cubes 160:half 174:green 186:grip
            196:sheetr 210:sheetf 225:cut2 239:sphere 256:hook 268:marker 283:bars 298:iso2 313:wing 327:note 342:stick 357:crop 368:grip
            377:pencil 392:bubble 407:shoe 422:docs 435:bin 448:grip 457:flat 467:a 477:first 492:rew 506:play 521:ffw 536:last 587:@sld:89 640:gear">
            <hw-combo slot="by" w="38" h="11">By Comp</hw-combo>
            <span slot="sld" class="sld"><i></i><i></i></span>
          </hw-toolbar>
          <hw-contour-panel></hw-contour-panel>
        </div>
      </div>
      <div class="status">0 entities selected</div>`;
  }
}
customElements.define('hw-app', HwApp);
</script>
</body>
</html>
